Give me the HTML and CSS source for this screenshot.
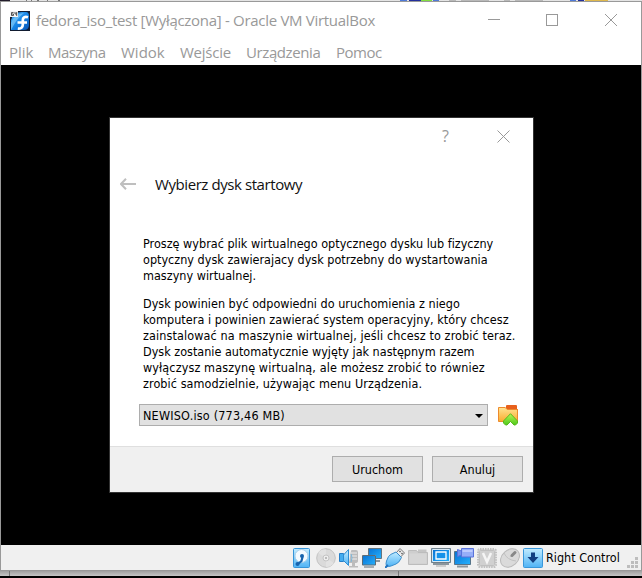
FILE: index.html
```html
<!DOCTYPE html>
<html lang="pl">
<head>
<meta charset="utf-8">
<title>fedora_iso_test [Wyłączona] - Oracle VM VirtualBox</title>
<link rel="stylesheet" href="styles.css">
</head>
<body>
<svg class="strip" width="642" height="1" viewBox="0 0 642 1" preserveAspectRatio="none" shape-rendering="crispEdges">
  <path fill="#e4e4e4" d="M0 0h642v2H0z"/><path fill="#231d2c" d="M0 0h10v2H0z"/>
  <path fill="#777" d="M26 0h1v1h-1zM31 0h1v1h-1zM37 0h2v1h-2zM47 0h1v1h-1zM58 0h2v1h-2z"/>
  <path fill="#4f7ad8" d="M400 0h7v2h-7zM433 0h6v2h-6zM570 0h6v2h-6z"/>
  <path fill="#24309c" d="M409 0h12v2h-12zM578 0h6v2h-6z"/>
  <path fill="#83df40" d="M421 0h11v2h-11z"/><path fill="#dfb84c" d="M585 0h23v2h-23z"/>
  <path fill="#b9b9b9" d="M449 0h7v2h-7zM461 0h28v2h-28zM504 0h6v2h-6zM515 0h28v2h-28z"/>
</svg>
<main class="window">
  <header class="titlebar">
    <svg class="app-icon" width="20" height="20" viewBox="0 0 20 20">
      <defs><linearGradient id="app" x1="0" y1="0" x2="1" y2="1"><stop offset="0" stop-color="#54b4f4"/><stop offset=".5" stop-color="#1685e6"/><stop offset="1" stop-color="#0753b5"/></linearGradient></defs>
      <path fill="#111b30" d="M0 0h20v20H0z"/>
      <path fill="url(#app)" d="M1 19V9Q4 1 12 1h4q3 0 3 4v9q0 5-5 5z"/>
      <path fill="#8fd4fb" d="M1 12Q4 3 14 2 7 7 1 19z" opacity=".6"/>
      <path fill="none" stroke="#fff" stroke-width="2.700" d="M18 6.200c-3.500-1-5.200.5-5.200 3v4.300c0 2.900-1.700 4.400-5 4M7.500 11.500H17"/>
      <path fill="#f4f4f4" d="M0 0h8v6H0z"/><path fill="none" stroke="#333" stroke-width=".8" d="M3.500 1.500h-2v3h2V3h-2M5 1v2h2M6.700 1v4"/>
    </svg>
    <h1 class="title">fedora_iso_test [Wyłączona] - Oracle VM VirtualBox</h1>
    <svg class="controls" width="131" height="13" viewBox="0 0 131 13" fill="none" stroke="#999" shape-rendering="crispEdges">
      <path d="M0 5.500h12M58.500.5h11v11h-11z"/><path d="m117 0 12 12m0-12-12 12" shape-rendering="auto"/>
    </svg>
  </header>
  <nav class="menu">
    <span class="m-plik">Plik</span><span class="m-maszyna">Maszyna</span><span class="m-widok">Widok</span><span class="m-wejscie">Wejście</span><span class="m-urz">Urządzenia</span><span class="m-pomoc">Pomoc</span>
  </nav>
  <section class="screen">
    <div class="dialog">
      <div class="dialog-controls">
        <span class="help">?</span>
        <svg width="13" height="13" viewBox="0 0 13 13"><path d="m.5.5 12 12m0-12-12 12" stroke="#999"/></svg>
      </div>
      <div class="heading">
        <svg width="17" height="12" viewBox="0 0 17 12" fill="none" stroke="#bfbfbf" stroke-width="2"><path d="M1 6H16M6 .8 1 6l5 5.200"/></svg>
        <h2>Wybierz dysk startowy</h2>
      </div>
      <div class="content">
        <p><span class="s01">Proszę wybrać plik wirtualnego optycznego dysku lub fizyczny</span><span class="s01">optyczny dysk zawierajacy dysk potrzebny do wystartowania</span><span class="s01">maszyny wirtualnej.</span></p>
        <p><span class="s01">Dysk powinien być odpowiedni do uruchomienia z niego</span><span class="s04">komputera i powinien zawierać system operacyjny, który chcesz</span><span class="s11">zainstalować na maszynie wirtualnej, jeśli chcesz to zrobić teraz.</span><span>Dysk zostanie automatycznie wyjęty jak następnym razem</span><span class="s11">wyłączysz maszynę wirtualną, ale możesz zrobić to równiez</span><span class="s07">zrobić samodzielnie, używając menu Urządzenia.</span></p>
      </div>
      <div class="picker">
        <div class="combo"><span>NEWISO.iso (773,46 MB)</span><svg width="8" height="4" viewBox="0 0 8 4"><path d="M0 0h8L4 4z"/></svg></div>
        <svg width="21" height="21" viewBox="0 0 21 21">
          <defs><linearGradient id="fold" x1="0" y1="0" x2="0" y2="1"><stop offset="0" stop-color="#ffe493"/><stop offset="1" stop-color="#fbab2f"/></linearGradient><linearGradient id="grn" x1="0" y1="0" x2="0" y2="1"><stop offset="0" stop-color="#b5f655"/><stop offset="1" stop-color="#4fc91b"/></linearGradient></defs>
          <path fill="#e8601c" d="M8 3V1q0-1 1-1h9q1 0 1 1v3h1v4H8z"/>
          <path fill="url(#fold)" stroke="#ed8a2c" d="M.5 2.500H7L9.500 4.500h10v12H.5z"/>
          <path fill="url(#grn)" stroke="#58b91e" d="M12.500 8.700 19.500 16v2l-2 2h-1.500l-3.500-3.500L9 20H7.500l-2-2v-2z"/>
        </svg>
      </div>
      <footer class="actions"><button>Uruchom</button><button>Anuluj</button></footer>
    </div>
  </section>
  <footer class="status">
    <svg width="20" height="20" viewBox="0 0 20 20"><defs><linearGradient id="sky" x1="0" y1="0" x2="0" y2="1"><stop offset="0" stop-color="#c2ecff"/><stop offset="1" stop-color="#4fb3f5"/></linearGradient><linearGradient id="scr" x1="0" y1="0" x2="1" y2="1"><stop offset="0" stop-color="#0872d4"/><stop offset="1" stop-color="#26b1fc"/></linearGradient></defs><rect x=".5" y=".5" width="16" height="19" rx="1" fill="url(#sky)" stroke="#3694d8"/><circle cx="8.500" cy="8" r="6.500" fill="#f3faff" stroke="#a7cfea"/><circle cx="9" cy="8" r="2" fill="#1763ad"/><path d="m9.500 9-1 4-4 3.500" fill="none" stroke="#1763ad" stroke-width="2.200"/><circle cx="4.500" cy="16" r="2" fill="#1763ad"/></svg>
    <svg width="20" height="20" viewBox="0 0 20 20"><circle cx="10" cy="10" r="9.300" fill="#dadada" stroke="#c2c2c2"/><path d="M10 10 2 5q3-4 8-4zM10 10l8 5q-3 4-8 4z" fill="#e2e2e2"/><circle cx="10" cy="10" r="3" fill="#eee" stroke="#c4c4c4"/><circle cx="10" cy="10" r="1" fill="#aaa"/></svg>
    <svg width="20" height="20" viewBox="0 0 20 20"><path d="M12 3q0-1 1-1h4q2 0 2 2v9q0 2-3 2v3h3v1.500h-9V18h3v-3h-3z" fill="#bcbcbc"/><path d="M12 5h6m-6 3h6m-6 3h6" stroke="#eee"/><path d="M.5 5.500h4v8h-4z" fill="#43acef" stroke="#257fc8"/><path d="M4.500 7 9.500 1.500v16l-5-5z" fill="url(#sky)" stroke="#2c8dd3"/><path d="M12 6q2 3.500 0 8" fill="none" stroke="#79b6dc"/></svg>
    <svg width="20" height="20" viewBox="0 0 20 20"><path d="M6.500.5h13v10h-13z" fill="url(#scr)" stroke="#62747f"/><path d="M13 12h5v2h-5z" fill="#8a969d"/><path d="M.5 7.500h13v10H.5z" fill="url(#scr)" stroke="#e5edf2"/><path d="M.5 7.500h13v9.500H.5zM2 19h10" fill="none" stroke="#5c6c76"/></svg>
    <svg width="20" height="20" viewBox="0 0 20 20"><path d="m11.500 4.500 3.500-4 4.500 4.500-4 4z" fill="#eee" stroke="#777"/><path d="m14.500 3 1 1m1 1 1 1" stroke="#555" stroke-width="1.300"/><path d="M1.500 18q-1-2 0-5l2-4.500q1-2 7.500-4.500l5.500 5.500Q14 15 11 16l-5 2q-3 1-4.500 0z" fill="url(#sky)" stroke="#398dcc"/><path d="m0 20 3-3" stroke="#2273bf" stroke-width="2"/></svg>
    <svg width="20" height="20" viewBox="0 0 20 20"><path d="M.5 2.500h8l1.500 2h9.500v12H.5z" fill="#cecece" stroke="#bcbcbc"/><path d="M10 4V1.500h8.500V4" fill="#c4c4c4"/><path d="M1.500 5.500h17v10h-17z" fill="#d6d6d6"/></svg>
    <svg width="20" height="20" viewBox="0 0 20 20"><path d="M.5.5h19v14H.5z" fill="#1292ef" stroke="#70808b"/><path d="M1.500 1.500h17v12h-17z" fill="url(#scr)" stroke="#d9e9f4"/><path d="M5 4h10v7H5z" fill="#1692e9" stroke="#fff" stroke-width="1.300"/><path d="M2 16h16" stroke="#8b969d" stroke-width="2"/><path d="M5 18h10" stroke="#aaa"/></svg>
    <svg width="20" height="20" viewBox="0 0 20 20"><path d="M.5 3.500h16v13H.5z" fill="url(#scr)" stroke="#567489"/><path d="M3 18.500h11" stroke="#8b969d" stroke-width="2"/><path d="M7.500.5h12v8.500h-12z" fill="#96aef8" stroke="#5a73db"/><path d="m3.500 1.500 4 1.500v4l-4 1.500z" fill="#7893ee" stroke="#5a73db"/><path d="M8.500 2h10v2h-10z" fill="#bdcbff"/></svg>
    <svg width="20" height="20" viewBox="0 0 20 20"><rect x="1" y="1" width="18" height="18" rx="2" fill="#ddd" stroke="#c0c0c0" stroke-width="2" stroke-dasharray="1.500 1"/><rect x="2.500" y="2.500" width="15" height="15" rx="1" fill="#d0d0d0" stroke="#c0c0c0"/><path d="m6 5 4 9 4-9" fill="none" stroke="#f5f5f5" stroke-width="2.500"/></svg>
    <svg width="20" height="20" viewBox="0 0 20 20"><ellipse cx="10" cy="10" rx="8" ry="10.500" transform="rotate(48 10 10)" fill="#dadada" stroke="#b9b9b9"/><path d="M4 5q3 7 12 8M10 9l5-6" fill="none" stroke="#c2c2c2"/><path d="m12 7.500 3-3" stroke="#888" stroke-width="3" stroke-linecap="round"/></svg>
    <svg width="20" height="20" viewBox="0 0 20 20"><rect x=".5" y=".5" width="19" height="19" rx="1" fill="url(#sky)" stroke="#3997da"/><path d="M8 4.500h4V9h3.500L10 15 4.500 9H8z" fill="#123f80"/></svg>
    <span class="hostkey">Right Control</span>
    <svg class="grip" width="11" height="11" viewBox="0 0 11 11" fill="#bdbdbd"><path d="M8 0h3v3H8zM4 4h3v3H4zM8 4h3v3H8zM0 8h3v3H0zM4 8h3v3H4zM8 8h3v3H8z"/></svg>
  </footer>
</main>
<div class="shadow"><i></i><i></i></div>
</body>
</html>
```
FILE: styles.css
```css
* { box-sizing: border-box; }
html, body { margin: 0; height: 578px; overflow: hidden; }
body { display: flex; flex-direction: column; background: #000; font: 12.5px/16px "DejaVu Sans Condensed", "DejaVu Sans", sans-serif; color: #000; }
h1, h2, p { margin: 0; font-weight: 400; }
svg { display: block; flex: none; }
.strip { height: 1px; }
.window { height: 570px; width: 642px; border: 1px solid #999; display: flex; flex-direction: column; background: #fff; }
.titlebar { height: 37px; display: flex; align-items: center; padding: 0 22px 0 9px; }
.app-icon { margin-right: 6px; }
.title { font: 15px/20px "Open Sans", sans-serif; letter-spacing: -.3px; color: #999; flex: 1; white-space: nowrap; margin-top: -1px; }
.menu { height: 26px; display: flex; padding-left: 8px; font: 15px/26px "Open Sans", sans-serif; color: #999; }
.m-plik { width: 39px; }
.m-maszyna { width: 73px; letter-spacing: -.5px; }
.m-widok { width: 59px; }
.m-wejscie { width: 66px; letter-spacing: -.25px; }
.m-urz { width: 90px; letter-spacing: -.4px; }
.m-pomoc { letter-spacing: -.5px; }
.screen { height: 480px; background: #000; padding: 52px 0 0 108px; }
.dialog { width: 425px; height: 376px; border: 1px solid #333; background: #fff; display: flex; flex-direction: column; }
.dialog-controls { height: 36px; display: flex; justify-content: flex-end; align-items: center; padding-right: 23px; }
.help { font: 16px/20px "Open Sans", sans-serif; color: #999; margin-right: 48px; }
.heading { height: 60px; display: flex; align-items: center; padding-left: 10px; gap: 18px; }
.heading h2 { font: 15px/20px "Open Sans", sans-serif; letter-spacing: -.42px; color: #111; }
.content { display: flex; flex-direction: column; gap: 12px; padding: 22px 0 0 33px; white-space: nowrap; }
.content span { display: block; }
.s01 { letter-spacing: .01px; }
.s04 { letter-spacing: .04px; }
.s07 { letter-spacing: .07px; }
.s11 { letter-spacing: .11px; }
.picker { display: flex; align-items: center; gap: 10px; padding: 12px 0 0 29px; }
.combo { width: 349px; height: 22px; border: 1px solid #adadad; background: #e1e1e1; display: flex; align-items: center; justify-content: space-between; padding: 1px 4px 0 3px; letter-spacing: .2px; }
.actions { margin-top: auto; height: 46px; background: #f0f0f0; border-top: 1px solid #dfdfdf; display: flex; justify-content: flex-end; gap: 9px; padding: 9px 10px 0 0; }
button { width: 91px; height: 26px; border: 1px solid #adadad; background: #e1e1e1; padding: 1px 0 0; font: inherit; color: #000; }
.status { height: 25px; background: #f0f0f0; display: flex; align-items: center; gap: 3px; padding: 1px 0 0 292px; }
.hostkey { white-space: nowrap; }
.grip { margin: 8px 3px 0 auto; }
.shadow { height: 5px; background: linear-gradient(#a0a0a0, #c6c6c6); padding-left: 9px; display: flex; gap: 388px; }
.shadow i { width: 1px; height: 5px; background: #777; }
```
